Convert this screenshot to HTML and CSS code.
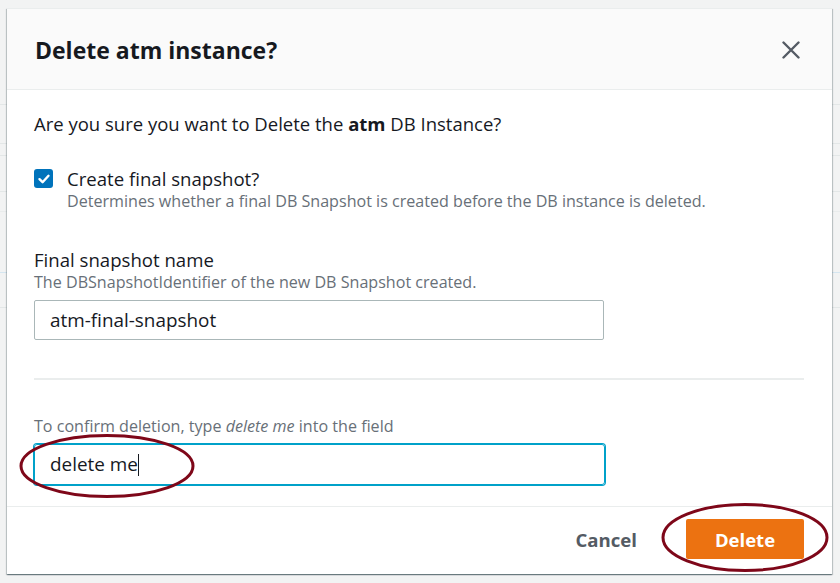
FILE: index.html
```html
<!DOCTYPE html>
<html>
<head>
<meta charset="utf-8">
<link rel="stylesheet" href="styles.css">
</head>
<body>
<div class="page">
  <div class="row r1"></div>
  <div class="row r2"></div>
  <div class="row r3"></div>
  <div class="row r4"></div>
  <div class="row r5"></div>
  <div class="row r6"></div>
  <div class="row r7"></div>
</div>

<div class="modal">
  <div class="header">
    <h2 class="title">Delete atm instance?</h2>
    <button class="close" aria-label="Close">
      <svg width="18" height="18" viewBox="0 0 18 18"><path d="M1.5 1.5 L16.5 16.5 M16.5 1.5 L1.5 16.5" stroke="#545b64" stroke-width="2.4" fill="none" stroke-linecap="round"/></svg>
    </button>
  </div>
  <div class="body">
    <p class="question">Are you sure you want to Delete the <b>atm</b> DB Instance?</p>
    <div class="check-row">
      <span class="checkbox">
        <svg width="14" height="14" viewBox="0 0 14 14"><path d="M2.5 7.2 L5.6 10.2 L11.5 3.8" stroke="#fff" stroke-width="2.4" fill="none" stroke-linecap="round" stroke-linejoin="round"/></svg>
      </span>
      <div class="check-text">
        <div class="label">Create final snapshot?</div>
        <div class="desc">Determines whether a final DB Snapshot is created before the DB instance is deleted.</div>
      </div>
    </div>
    <div class="field">
      <div class="label">Final snapshot name</div>
      <div class="desc">The DBSnapshotIdentifier of the new DB Snapshot created.</div>
      <div class="input">atm-final-snapshot</div>
    </div>
    <div class="divider"></div>
    <div class="field confirm">
      <div class="desc">To confirm deletion, type <i>delete me</i> into the field</div>
      <div class="input focused">delete me<span class="caret"></span></div>
    </div>
  </div>
  <div class="footer">
    <button class="btn-cancel">Cancel</button>
    <button class="btn-delete">Delete</button>
  </div>
</div>

<svg class="annot" width="840" height="583" viewBox="0 0 840 583">
  <ellipse cx="107" cy="466" rx="86" ry="30.5" fill="none" stroke="#7e0719" stroke-width="3"/>
  <ellipse cx="745" cy="537.5" rx="82" ry="33" fill="none" stroke="#7e0719" stroke-width="3"/>
</svg>
</body>
</html>
```

FILE: styles.css
```css
html, body {
  margin: 0;
  padding: 0;
}
body {
  width: 840px;
  height: 583px;
  overflow: hidden;
  background: #f2f3f3;
  font-family: "Open Sans", "Noto Sans", sans-serif;
  color: #16191f;
  position: relative;
}

.page {
  padding-top: 104px;
}
.row {
  border-top: 1px solid #e3e7e7;
}
.r1 { height: 38px; }
.r2 { height: 11px; }
.r3 { height: 35px; }
.r4 { height: 19px; }
.r5 { height: 60px; border-top-color: #e9ecec; }
.r6 { height: 34px; border-top-color: #d5e6f0; }
.r7 { height: 10px; }

.modal {
  position: absolute;
  left: 7px;
  top: 8px;
  width: 825px;
  background: #fff;
  box-shadow: 0 1px 1px 0 rgba(0, 28, 36, .35), 1px 1px 1px 0 rgba(0, 28, 36, .18), -1px 1px 1px 0 rgba(0, 28, 36, .18);
  border-top: 1px solid #eaeded;
}

.header {
  height: 80px;
  background: #fafafa;
  border-bottom: 1px solid #eaeded;
  display: flex;
  align-items: center;
  justify-content: space-between;
  padding: 0 32px 0 28px;
}
.title {
  margin: 0;
  font-size: 23px;
  font-weight: 700;
  line-height: 28px;
  color: #16191f;
  padding-top: 1px;
}
.close {
  border: 0;
  background: none;
  padding: 0;
  width: 18px;
  height: 18px;
  display: flex;
  margin-top: 1px;
}

.body {
  padding: 23px 28px 21px 27px;
  border-bottom: 1px solid #eaeded;
}
.question {
  margin: 0;
  font-size: 18.5px;
  line-height: 22px;
}
.question b { font-weight: 700; }

.check-row {
  display: flex;
  margin-top: 33px;
  gap: 14px;
}
.checkbox {
  flex: none;
  width: 19px;
  height: 19px;
  border-radius: 3px;
  background: #0073bb;
  display: flex;
  align-items: center;
  justify-content: center;
  margin-top: 1px;
}
.label {
  font-size: 18.6px;
  line-height: 22px;
  color: #16191f;
}
.desc {
  font-size: 16.1px;
  line-height: 22px;
  color: #687078;
}

.field {
  margin-top: 37px;
}
.input {
  margin-top: 7px;
  width: 570px;
  height: 40px;
  box-sizing: border-box;
  border: 1px solid #aab7b8;
  border-radius: 2px;
  padding: 0 15px;
  font-size: 18.9px;
  line-height: 38px;
  color: #16191f;
}
.input.focused {
  width: 571px;
  height: 41px;
  border-color: #00a1c9;
  box-shadow: 0 0 0 1px #00a1c9;
  border-radius: 3px;
  line-height: 39px;
}
.caret {
  display: inline-block;
  width: 1px;
  height: 22px;
  background: #16191f;
  vertical-align: -5px;
}

.divider {
  margin-top: 38px;
  height: 2px;
  background: #eaeded;
}
.confirm {
  margin-top: 35px;
}

.footer {
  display: flex;
  justify-content: flex-end;
  align-items: center;
  padding: 12px 28px 15px;
}
.btn-cancel {
  border: 0;
  background: none;
  font-family: inherit;
  font-size: 18.6px;
  font-weight: 700;
  color: #545b64;
  padding: 0 20px;
  height: 40px;
  margin-right: 29px;
}
.btn-delete {
  border: 0;
  border-radius: 2px;
  background: #ec7211;
  color: #fff;
  font-family: inherit;
  font-size: 18.5px;
  font-weight: 700;
  width: 118px;
  height: 40px;
}

.annot {
  position: absolute;
  left: 0;
  top: 0;
  pointer-events: none;
}
```
